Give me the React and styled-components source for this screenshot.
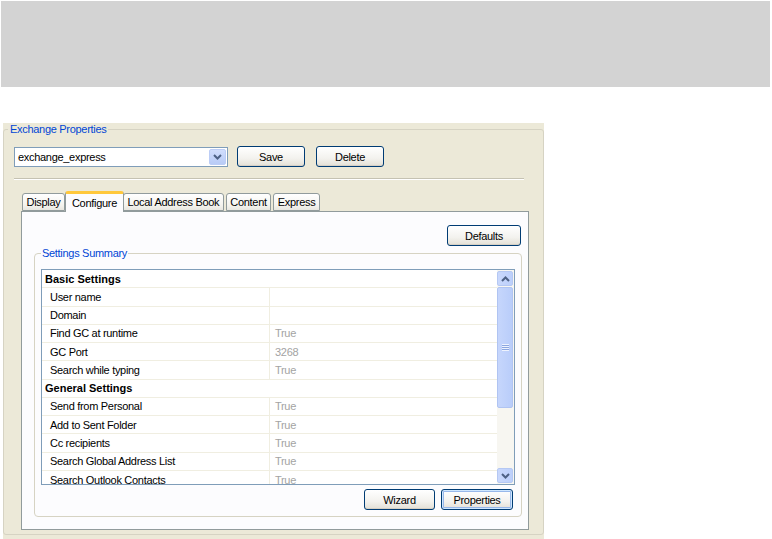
import React from "react";
import styled, { createGlobalStyle } from "styled-components";

const GlobalStyle = createGlobalStyle`
  body {
    margin: 0;
    background: #fff;
    font-family: "Liberation Sans", Arial, sans-serif;
    font-size: 11px;
    letter-spacing: -0.3px;
    color: #000;
  }
`;

const rows = [
    { section: "Basic Settings" },
    { label: "User name", value: "" },
    { label: "Domain", value: "" },
    { label: "Find GC at runtime", value: "True" },
    { label: "GC Port", value: "3268" },
    { label: "Search while typing", value: "True" },
    { section: "General Settings" },
    { label: "Send from Personal", value: "True" },
    { label: "Add to Sent Folder", value: "True" },
    { label: "Cc recipients", value: "True" },
    { label: "Search Global Address List", value: "True" },
    { label: "Search Outlook Contacts", value: "True" },
];

const tabs = ["Display", "Configure", "Local Address Book", "Content", "Express"];

const Chevron = ({ down }) => (
    <svg width="9" height="6" viewBox="0 0 9 6">
        <path
            d={down ? "M1 1 L4.5 4.5 L8 1" : "M1 5 L4.5 1.5 L8 5"}
            fill="none"
            stroke="#4d6185"
            strokeWidth="2"
        />
    </svg>
);

const App = () => {
    return (
        <Page>
            <GlobalStyle />
            <Banner />
            <Panel>
                <Group>
                    <Legend>Exchange Properties</Legend>
                    <GroupBody>
                        <ToolRow>
                            <Combo>
                                <ComboText>exchange_express</ComboText>
                                <ComboArrow>
                                    <Chevron down />
                                </ComboArrow>
                            </Combo>
                            <Button $width={68} $gap={9}>Save</Button>
                            <Button $width={68} $gap={11}>Delete</Button>
                        </ToolRow>
                        <Separator />
                        <TabRow>
                            {tabs.map((t) => (
                                <Tab key={t} $active={t === "Configure"}>{t}</Tab>
                            ))}
                        </TabRow>
                        <TabPanel>
                            <DefaultsRow>
                                <Button $width={74}>Defaults</Button>
                            </DefaultsRow>
                            <SummaryGroup>
                                <SummaryLegend>Settings Summary</SummaryLegend>
                                <Grid>
                                    <GridRows>
                                        {rows.map((r, i) =>
                                            r.section ? (
                                                <SectionRow key={i}>{r.section}</SectionRow>
                                            ) : (
                                                <Row key={i}>
                                                    <LabelCell>{r.label}</LabelCell>
                                                    <ValueCell>{r.value}</ValueCell>
                                                </Row>
                                            )
                                        )}
                                    </GridRows>
                                    <Scrollbar>
                                        <ScrollButton>
                                            <Chevron />
                                        </ScrollButton>
                                        <Thumb>
                                            <Grip />
                                        </Thumb>
                                        <Track />
                                        <ScrollButton>
                                            <Chevron down />
                                        </ScrollButton>
                                    </Scrollbar>
                                </Grid>
                                <ButtonRow>
                                    <Button $width={71}>Wizard</Button>
                                    <Button $width={72} $gap={6} $focused>Properties</Button>
                                </ButtonRow>
                            </SummaryGroup>
                        </TabPanel>
                    </GroupBody>
                </Group>
            </Panel>
        </Page>
    );
};

export default App;

const Page = styled.div`
    width: 772px;
    height: 539px;
    overflow: hidden;
`;
const Banner = styled.div`
    margin: 1px 2px 0 1px;
    height: 86px;
    background: #d3d3d3;
`;
const Panel = styled.div`
    margin: 36px 0 0 3px;
    width: 541px;
    height: 416px;
    background: #ece9d8;
`;
const Group = styled.fieldset`
    margin: 0;
    padding: 0 0 0 4px;
    height: 412px;
    box-sizing: border-box;
    border: 1px solid #d6d3c3;
    border-radius: 3px;
`;
const Legend = styled.legend`
    padding: 0 2px;
    line-height: 13px;
    color: #0046d5;
`;
const GroupBody = styled.div`
    padding-left: 6px;
`;
const ToolRow = styled.div`
    display: flex;
    align-items: flex-start;
    margin-top: 10px;
`;
const Combo = styled.div`
    display: flex;
    align-items: center;
    width: 214px;
    height: 20px;
    margin-top: 1px;
    box-sizing: border-box;
    border: 1px solid #7f9db9;
    background: #fff;
`;
const ComboText = styled.div`
    flex: 1;
    padding-left: 3px;
`;
const ComboArrow = styled.div`
    display: flex;
    align-items: center;
    justify-content: center;
    width: 17px;
    height: 16px;
    margin-right: 1px;
    border-radius: 2px;
    border: 1px solid #bccdf6;
    box-sizing: border-box;
    background: linear-gradient(#d0ddfc, #b8cbf6);
`;
const Button = styled.div`
    display: flex;
    align-items: center;
    justify-content: center;
    width: ${(p) => p.$width}px;
    height: 21px;
    margin-left: ${(p) => p.$gap || 0}px;
    box-sizing: border-box;
    border: 1px solid #003c74;
    border-radius: 3px;
    background: linear-gradient(#ffffff, #f3f2ee 60%, #e3e0d6);
    box-shadow: ${(p) =>
        p.$focused
            ? "inset 0 0 0 1px #cee7ff, inset 0 0 0 2px #98b8ea"
            : "inset 0 -1px 0 #d6d0c5"};
`;
const Separator = styled.div`
    width: 510px;
    margin-top: 11px;
    border-top: 1px solid #c5c2b2;
    border-bottom: 1px solid #fff;
`;
const TabRow = styled.div`
    display: flex;
    align-items: flex-end;
    margin: 11px 0 0 8px;
    height: 20px;
    position: relative;
    z-index: 1;
`;
const Tab = styled.div`
    display: flex;
    align-items: center;
    box-sizing: border-box;
    padding: ${(p) => (p.$active ? "0 6px" : "0 3.5px")};
    height: ${(p) => (p.$active ? "21px" : "18px")};
    margin: ${(p) => (p.$active ? "0 -1px -1px -2px" : "0 2px 0 0")};
    border: 1px solid #919b9c;
    border-bottom: ${(p) => (p.$active ? "none" : "1px solid #919b9c")};
    border-top: ${(p) => (p.$active ? "3px solid #ffc83c" : "1px solid #919b9c")};
    border-radius: 3px 3px 0 0;
    background: ${(p) =>
        p.$active ? "#fcfcfe" : "linear-gradient(#ffffff, #f4f3ee 70%, #e8e7e0)"};
    position: relative;
    z-index: ${(p) => (p.$active ? 2 : 1)};
`;
const TabPanel = styled.div`
    width: 508px;
    height: 319px;
    margin-left: 7px;
    box-sizing: border-box;
    border: 1px solid #919b9c;
    background: #fcfcfe;
`;
const DefaultsRow = styled.div`
    display: flex;
    justify-content: flex-end;
    margin: 13px 7px 0 0;
`;
const SummaryGroup = styled.fieldset`
    margin: 1px 6px 0 12px;
    padding: 0 6px 6px 6px;
    border: 1px solid #d6d3c3;
    border-radius: 4px;
`;
const SummaryLegend = styled.legend`
    padding: 0 1px;
    line-height: 13px;
    color: #0046d5;
`;
const Grid = styled.div`
    display: flex;
    height: 216px;
    margin-top: 9px;
    box-sizing: border-box;
    border: 1px solid #7f9db9;
    background: #fff;
`;
const GridRows = styled.div`
    flex: 1;
    overflow: hidden;
`;
const Row = styled.div`
    display: flex;
    height: 18.27px;
    box-sizing: border-box;
    border-bottom: 1px solid #f0eee1;
`;
const SectionRow = styled(Row)`
    align-items: center;
    padding-left: 3px;
    font-weight: bold;
    letter-spacing: 0;
`;
const LabelCell = styled.div`
    display: flex;
    align-items: center;
    width: 227px;
    padding-left: 8px;
    box-sizing: border-box;
`;
const ValueCell = styled.div`
    display: flex;
    align-items: center;
    flex: 1;
    padding-left: 5px;
    border-left: 1px solid #f0eee1;
    color: #a3a3a3;
`;
const Scrollbar = styled.div`
    display: flex;
    flex-direction: column;
    width: 17px;
    padding: 1px 1px 1px 0;
    box-sizing: border-box;
    background: #f7f6f1;
`;
const ScrollButton = styled.div`
    display: flex;
    align-items: center;
    justify-content: center;
    height: 15px;
    box-sizing: border-box;
    border: 1px solid #b5c8f3;
    border-radius: 2px;
    background: linear-gradient(90deg, #c9d8fc, #bccffb);
`;
const Thumb = styled.div`
    display: flex;
    align-items: center;
    justify-content: center;
    height: 121px;
    margin-top: 1px;
    box-sizing: border-box;
    border: 1px solid #b0c4f2;
    border-radius: 2px;
    background: linear-gradient(90deg, #c6d6fc, #b9cdfa);
`;
const Grip = styled.div`
    width: 7px;
    height: 7px;
    background: repeating-linear-gradient(#eef3fe 0 1px, #8ca7e0 1px 2px);
`;
const Track = styled.div`
    flex: 1;
`;
const ButtonRow = styled.div`
    display: flex;
    justify-content: flex-end;
    margin: 4px 2px 0 0;
`;
